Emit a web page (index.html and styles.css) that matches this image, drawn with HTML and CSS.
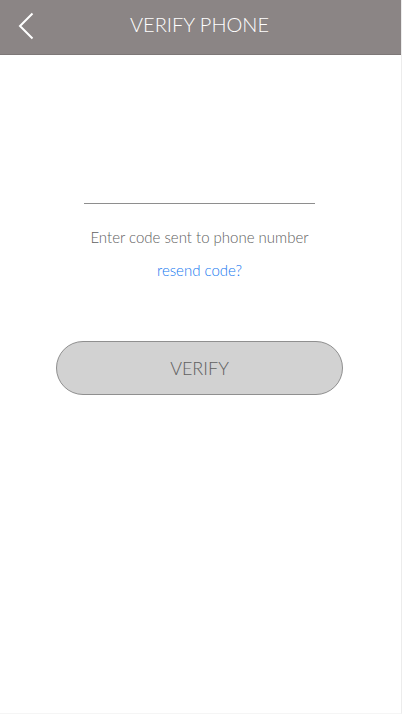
FILE: index.html
```html
<!DOCTYPE html>
<html lang="en">
<head>
<meta charset="utf-8">
<meta name="viewport" content="width=device-width, initial-scale=1">
<title>Verify phone</title>
<link rel="stylesheet" href="styles.css">
</head>
<body>
<div class="screen">
  <header class="bar">
    <button class="back" type="button" aria-label="Back">
      <svg class="back-icon" viewBox="0 0 16 28" aria-hidden="true"><path d="M14.500 1.500 2 14l12.500 12.500"/></svg>
    </button>
    <h1 class="title">VERIFY PHONE</h1>
  </header>
  <main>
    <form class="form">
      <input class="code" id="code" type="text" inputmode="numeric" autocomplete="one-time-code">
      <label class="hint" for="code">Enter code sent to phone number</label>
      <a class="resend" href="#">resend code?</a>
      <button class="verify" type="submit">VERIFY</button>
    </form>
  </main>
</div>
</body>
</html>
```

FILE: styles.css
```css
* {
  box-sizing: border-box;
}

body {
  margin: 0;
  background: #fff;
  color: #606060;
  font-family: Lato, "Liberation Sans", sans-serif;
  font-size: 15px;
  font-weight: 300;
  line-height: 20px;
}

.screen {
  min-height: 100vh;
  border-right: 1px solid #ececec;
  border-bottom: 1px solid #f5f5f5;
}

.bar {
  display: grid;
  grid-template-columns: 52px 1fr 54px;
  align-items: center;
  height: 55px;
  padding-bottom: 2px;
  border-bottom: 1px solid #7d7777;
  background: #8b8585;
  color: #fff;
}

.back {
  display: flex;
  justify-content: center;
  padding: 0;
  border: 0;
  background: none;
  color: inherit;
}

.back-icon {
  width: 16px;
  height: 28px;
  fill: none;
  stroke: currentColor;
  stroke-width: 2;
}

.title {
  margin: 0;
  padding-bottom: 4px;
  font-size: 20px;
  font-weight: 300;
  line-height: 24px;
  text-align: center;
}

.form {
  display: flex;
  flex-direction: column;
  align-items: center;
  padding: 109px 2px 0 0;
}

.code {
  width: 58%;
  height: 40px;
  padding: 0;
  border: 0;
  border-bottom: 1px solid #8e8e8e;
  border-radius: 0;
  outline: 0;
  background: none;
  color: inherit;
  font: inherit;
  font-size: 20px;
  text-align: center;
}

.hint {
  margin-top: 23px;
}

.resend {
  margin-top: 13px;
  color: #1478f0;
  text-decoration: none;
}

.verify {
  width: 72%;
  height: 54px;
  margin-top: 61px;
  border: 1px solid #8f8f8f;
  border-radius: 27px;
  background: #d2d2d2;
  color: #606060;
  font: inherit;
  font-size: 18px;
}
```
